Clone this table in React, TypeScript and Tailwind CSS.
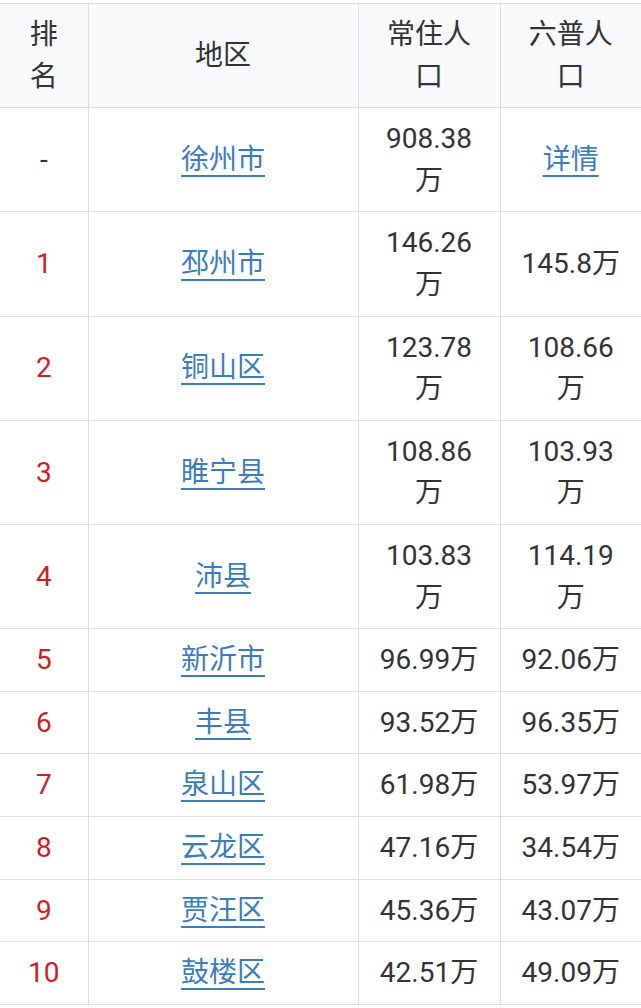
import React from "react";

type Row = {
  rank: string;
  name: string;
  resident: string;
  census: string;
  censusLink?: boolean;
};

const rows: Row[] = [
  { rank: "-", name: "徐州市", resident: "908.38万", census: "详情", censusLink: true },
  { rank: "1", name: "邳州市", resident: "146.26万", census: "145.8万" },
  { rank: "2", name: "铜山区", resident: "123.78万", census: "108.66万" },
  { rank: "3", name: "睢宁县", resident: "108.86万", census: "103.93万" },
  { rank: "4", name: "沛县", resident: "103.83万", census: "114.19万" },
  { rank: "5", name: "新沂市", resident: "96.99万", census: "92.06万" },
  { rank: "6", name: "丰县", resident: "93.52万", census: "96.35万" },
  { rank: "7", name: "泉山区", resident: "61.98万", census: "53.97万" },
  { rank: "8", name: "云龙区", resident: "47.16万", census: "34.54万" },
  { rank: "9", name: "贾汪区", resident: "45.36万", census: "43.07万" },
  { rank: "10", name: "鼓楼区", resident: "42.51万", census: "49.09万" },
];

const cell =
  "border border-[#dcdee2] px-4 py-[10px] text-center align-middle";

function Link({ children }: { children: React.ReactNode }) {
  return (
    <a
      href="#"
      className="text-[#3c7dbd] underline decoration-[1.5px] underline-offset-[6px]"
    >
      {children}
    </a>
  );
}

export default function App() {
  return (
    <div className="bg-white w-[641px] h-[1008px] overflow-hidden pt-[3px]">
      <table
        className="table-fixed border-collapse w-[641px] text-[28px] leading-[41.6px] text-[#333]"
        style={{ fontFamily: 'Roboto, "Noto Sans CJK SC", sans-serif' }}
      >
        <colgroup>
          <col className="w-[88px]" />
          <col className="w-[270px]" />
          <col className="w-[142px]" />
          <col className="w-[141px]" />
        </colgroup>
        <thead>
          <tr className="bg-[#f8f9fa]">
            <th className={`${cell} font-normal border-l-0`}>排名</th>
            <th className={`${cell} font-normal`}>地区</th>
            <th className={`${cell} font-normal`}>常住人口</th>
            <th className={`${cell} font-normal border-r-0`}>六普人口</th>
          </tr>
        </thead>
        <tbody>
          {rows.map((r) => (
            <tr key={r.name}>
              <td
                className={`${cell} border-l-0 ${
                  r.rank === "-" ? "text-[#333]" : "text-[#cc1f1f]"
                }`}
              >
                {r.rank}
              </td>
              <td className={cell}>
                <Link>{r.name}</Link>
              </td>
              <td className={cell}>{r.resident}</td>
              <td className={`${cell} border-r-0`}>
                {r.censusLink ? <Link>{r.census}</Link> : r.census}
              </td>
            </tr>
          ))}
        </tbody>
      </table>
    </div>
  );
}
